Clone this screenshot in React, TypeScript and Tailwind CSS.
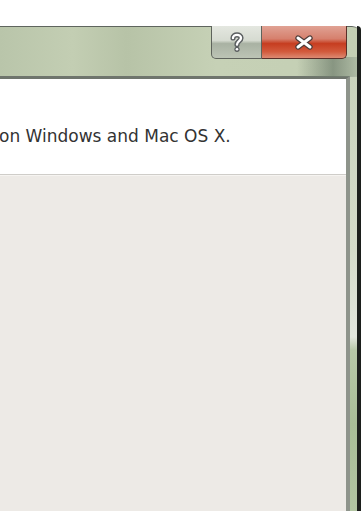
import React from "react";

export default function App() {
  return (
    <div className="w-[361px] h-[511px] bg-white flex flex-col overflow-hidden" style={{ fontFamily: "Tahoma, 'DejaVu Sans', sans-serif" }}>
      <div className="h-[26px] shrink-0 bg-white" />
      <div className="flex-1 flex flex-col rounded-tr-[9px] border-t border-[#5f655e] bg-[linear-gradient(90deg,#b9c5aa_0%,#c3ceb3_20%,#b7c3a7_35%,#c6d1b6_60%,#c4cfb4_100%)] relative">
        {/* title bar */}
        <div className="h-[49px] shrink-0 flex justify-end pr-[14px] relative">
          <div className="absolute right-[4px] top-[30px] w-[60px] h-[20px] bg-[linear-gradient(90deg,rgba(120,135,118,0)_0%,rgba(110,125,108,0.7)_60%,rgba(140,155,138,0.4)_100%)]" />
          <div className="relative flex h-[33px] -mt-px">
            <div className="w-[51px] h-full rounded-bl-[5px] border border-t-0 border-[#5e635c] bg-[linear-gradient(180deg,#e4e7e0_0%,#d6dbd1_45%,#a9b2a3_55%,#bcc4b5_100%)] flex items-center justify-center">
              <svg width="14" height="21" viewBox="0 0 14 21" className="mt-[1px]">
                <path d="M3 6 C3 1.8 11 1.8 11 6 C11 9 7 9.2 7 12.5" fill="none" stroke="#5a5e60" strokeWidth="5.2" strokeLinecap="round" />
                <path d="M3 6 C3 1.8 11 1.8 11 6 C11 9 7 9.2 7 12.5" fill="none" stroke="#ffffff" strokeWidth="2.4" strokeLinecap="round" />
                <circle cx="7" cy="17.3" r="2.6" fill="#5a5e60" />
                <circle cx="7" cy="17.3" r="1.3" fill="#ffffff" />
              </svg>
            </div>
            <div className="w-[85px] h-full rounded-br-[5px] border border-t-0 border-l-0 border-[#5a2f28] bg-[linear-gradient(180deg,#e0a294_0%,#d6806d_40%,#c63d20_55%,#d25a3c_80%,#dd8a72_100%)] flex items-center justify-center">
              <svg width="20" height="15" viewBox="0 0 20 15">
                <path d="M4 3 L16 12 M16 3 L4 12" fill="none" stroke="#4e3c39" strokeWidth="5.4" strokeLinecap="round" />
                <path d="M4 3 L16 12 M16 3 L4 12" fill="none" stroke="#ffffff" strokeWidth="3" strokeLinecap="round" />
              </svg>
            </div>
          </div>
        </div>
        {/* body */}
        <div className="flex-1 flex">
          <div className="flex-1 flex flex-col border-t-[3px] border-r-[4px] border-t-[#6f756d] border-r-[#8e948b] bg-white">
            <div className="h-[95px] shrink-0 bg-white pt-[47px]">
              <div className="text-[17px] leading-[20px] text-[#333333] whitespace-nowrap -ml-[1px]">on Windows and Mac OS X.</div>
            </div>
            <div className="h-[2px] bg-[#cfcdc9] border-b border-[#f6f4f1]" />
            <div className="flex-1 bg-[#edeae6]" />
          </div>
          <div className="w-[7px] bg-[linear-gradient(180deg,#c9d3bc_0%,#d5dcca_40%,#e3e7de_60%,#b8c9a8_63%,#a9be97_80%,#b2c5a2_100%)]" />
          <div className="w-[4px] bg-[#1c1f1c]" />
        </div>
        <div className="absolute right-0 top-[-1px] w-[4px] h-[60px] bg-[#1c1f1c] rounded-tr-[9px]" />
      </div>
    </div>
  );
}
